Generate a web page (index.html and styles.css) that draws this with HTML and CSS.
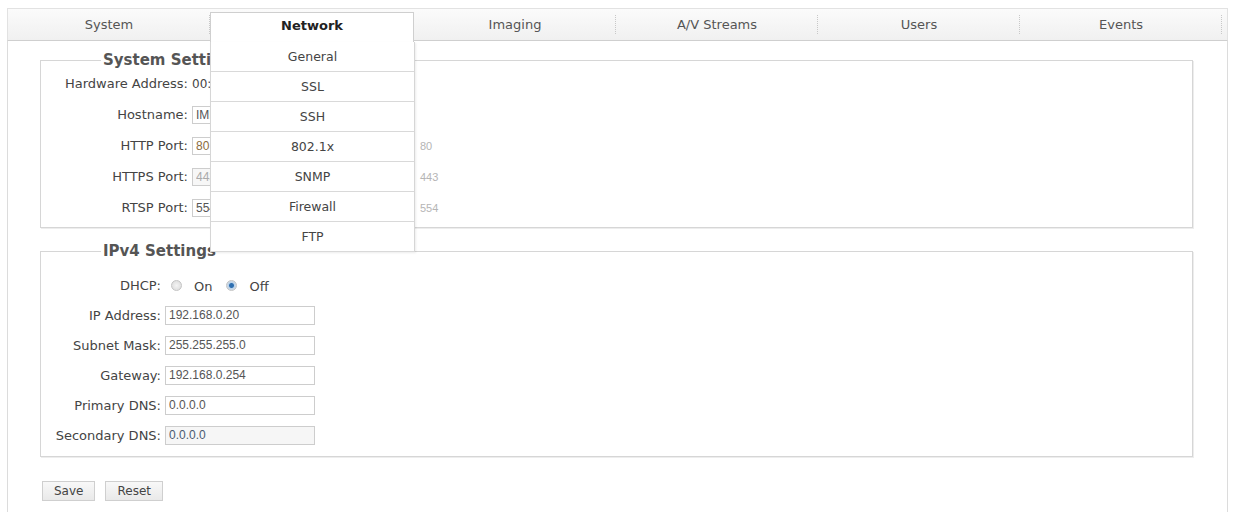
FILE: index.html
```html
<!DOCTYPE html>
<html lang="en">
<head>
    <meta charset="UTF-8">
    <title>Network Settings</title>
    <link rel="stylesheet" href="styles.css">
</head>
<body>
    <div class="page">
        <ul class="tabs">
            <li class="tab">System</li>
            <li class="tab active">Network
                <ul class="menu">
                    <li>General</li>
                    <li>SSL</li>
                    <li>SSH</li>
                    <li>802.1x</li>
                    <li>SNMP</li>
                    <li>Firewall</li>
                    <li>FTP</li>
                </ul>
            </li>
            <li class="tab">Imaging</li>
            <li class="tab">A/V Streams</li>
            <li class="tab">Users</li>
            <li class="tab">Events</li>
        </ul>

        <div class="panel">
            <!-- system settings -->
            <fieldset class="group sys">
                <legend>System Settings</legend>
                <div class="row"><label>Hardware Address:</label><span class="value">00:0F:7C:12:A4:3B</span></div>
                <div class="row"><label>Hostname:</label><input type="text" value="IMPNET-CAM01"></div>
                <div class="row"><label>HTTP Port:</label><input type="text" class="port" value="80"><span class="hint">80</span></div>
                <div class="row"><label>HTTPS Port:</label><input type="text" class="off" value="443" disabled><span class="hint">443</span></div>
                <div class="row"><label>RTSP Port:</label><input type="text" value="554"><span class="hint">554</span></div>
            </fieldset>

            <!-- ipv4 -->
            <fieldset class="group ipv4">
                <legend>IPv4 Settings</legend>
                <div class="row">
                    <label>DHCP:</label>
                    <span class="choice">
                        <span class="radio"></span><span class="opt">On</span>
                        <span class="radio checked"></span><span class="opt">Off</span>
                    </span>
                </div>
                <div class="row"><label>IP Address:</label><input type="text" value="192.168.0.20"></div>
                <div class="row"><label>Subnet Mask:</label><input type="text" value="255.255.255.0"></div>
                <div class="row"><label>Gateway:</label><input type="text" value="192.168.0.254"></div>
                <div class="row"><label>Primary DNS:</label><input type="text" value="0.0.0.0"></div>
                <div class="row"><label>Secondary DNS:</label><input type="text" class="grey" value="0.0.0.0"></div>
            </fieldset>

            <div class="actions">
                <button>Save</button>
                <button>Reset</button>
            </div>
        </div>
    </div>
</body>
</html>
```

FILE: styles.css
```css
body {
    margin: 0;
    background: #fff;
    font-family: "DejaVu Sans", sans-serif;
    font-size: 13px;
    color: #444;
}
.page {
    padding: 8px 6px 0 7px;
}
.tabs {
    display: flex;
    margin: 0;
    padding: 0;
    list-style: none;
    height: 31px;
    border: 1px solid #e2e2e2;
    border-bottom-color: #cfcfcf;
    background: linear-gradient(#fbfbfb, #f0f0f0);
}
.tab {
    position: relative;
    flex: 0 0 202px;
    text-align: center;
    line-height: 31px;
    color: #555;
}
.tab::after {
    content: "";
    position: absolute;
    right: 0;
    top: 6px;
    bottom: 6px;
    border-right: 1px dotted #c8c8c8;
}
.tab.active {
    margin-top: 3px;
    height: 29px;
    line-height: 25px;
    background: #fff;
    border: 1px solid #cfcfcf;
    border-bottom: none;
    font-weight: bold;
    color: #222;
    z-index: 2;
}
.tab.active::after {
    display: none;
}
.menu {
    position: absolute;
    top: 29px;
    left: -1px;
    width: 203px;
    margin: 0;
    padding: 0;
    list-style: none;
    background: #fff;
    border-left: 1px solid #d6d6d6;
    border-right: 1px solid #d6d6d6;
    box-shadow: 1px 1px 2px rgba(0, 0, 0, 0.08);
}
.menu li {
    height: 29px;
    line-height: 29px;
    border-bottom: 1px solid #d9d9d9;
    font-weight: normal;
    font-size: 12.5px;
    color: #444;
}
.panel {
    min-height: 480px;
    padding: 11px 34px 0 32px;
    border-left: 1px solid #dcdcdc;
    border-right: 1px solid #dcdcdc;
}
.group {
    margin: 0;
    padding: 0 0 4px 0;
    border: 1px solid #d6d6d6;
    box-shadow: 1px 1px 0 #ededed;
}
.group legend {
    margin-left: 60px;
    padding: 0 2px;
    line-height: 16px;
    font-weight: bold;
    font-size: 15px;
    color: #555;
}
.row {
    display: flex;
    align-items: center;
    height: 31px;
}
.row label {
    flex: 0 0 auto;
    text-align: right;
    margin-right: 4px;
}
.sys .row label {
    width: 147px;
}
.ipv4 {
    margin-top: 15px;
    padding: 11px 0 6px 0;
}
.ipv4 .row {
    height: 30px;
}
.ipv4 .row label {
    width: 120px;
}
.value {
    font-size: 12px;
}
input {
    box-sizing: border-box;
    width: 150px;
    height: 19px;
    padding: 0 3px;
    border: 1px solid #cdcdcd;
    background: #fff;
    font-family: "Liberation Sans", Arial, sans-serif;
    font-size: 12px;
    color: #555;
}
.sys input {
    width: 220px;
    height: 18px;
}
input.port {
    color: #8a6b3e;
}
input.off {
    background: #f7f7f7;
    color: #aaa;
}
input.grey {
    background: #f6f6f6;
    color: #4a5a70;
}
.hint {
    margin-left: 8px;
    font-family: "Liberation Sans", Arial, sans-serif;
    font-size: 11px;
    color: #b5b5b5;
}
.choice {
    display: flex;
    align-items: center;
    padding-left: 6px;
}
.radio {
    box-sizing: border-box;
    width: 11px;
    height: 11px;
    border-radius: 50%;
    border: 1px solid #c4c4c4;
    background: radial-gradient(circle, #f4f4f4, #d8d8d8);
}
.radio.checked {
    background: radial-gradient(circle, #2f6fb0 0 2px, #bcd3ea 3px, #e3e3e3 100%);
}
.opt {
    margin: 2px 14px 0 12px;
}
.actions {
    display: flex;
    gap: 10px;
    margin-top: 24px;
    padding-left: 2px;
}
button {
    height: 20px;
    padding: 0 11px;
    border: 1px solid #cfcfcf;
    background: linear-gradient(#f8f8f8, #e9e9e9);
    font-family: "DejaVu Sans", sans-serif;
    font-size: 12px;
    color: #444;
}
```
